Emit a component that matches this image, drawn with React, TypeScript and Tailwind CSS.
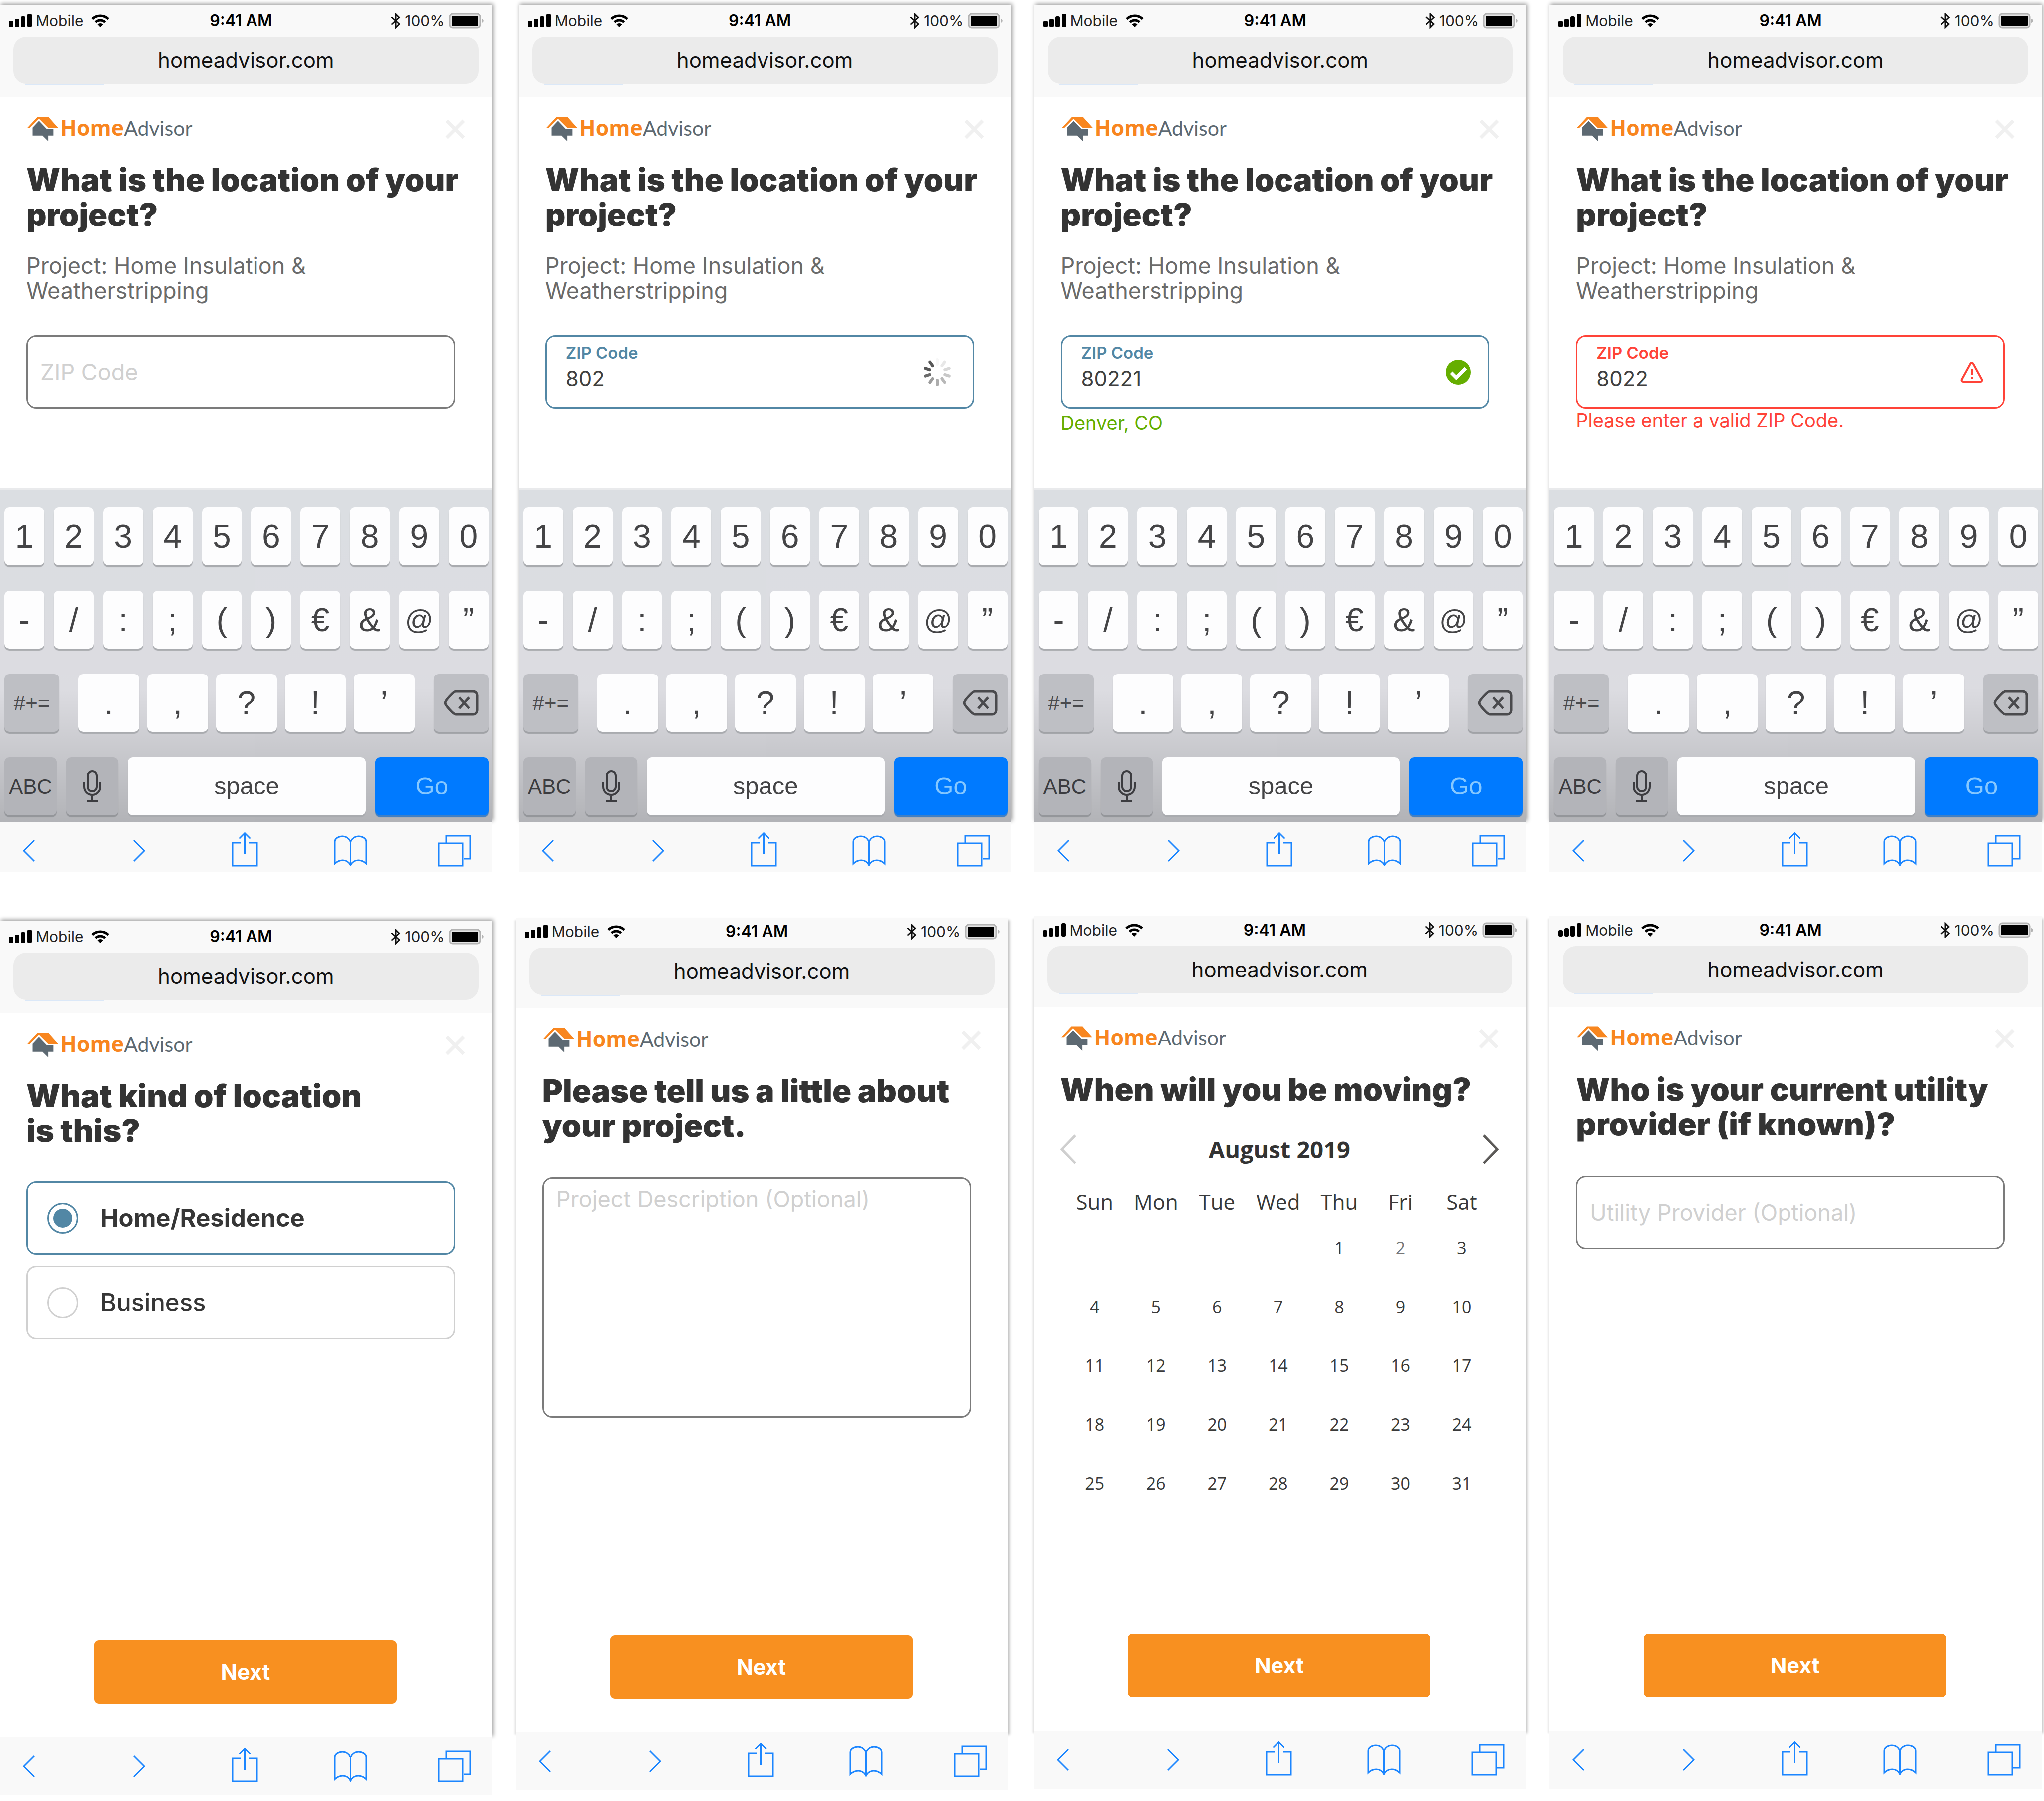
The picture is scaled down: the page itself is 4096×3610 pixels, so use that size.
import { useId, type ReactNode } from "react";

const INTER = "font-['Inter',sans-serif]";
const KEY_FONT = "font-['Liberation_Sans',Arial,sans-serif]";

/* ---------- icons ---------- */

function SignalBars() {
  return (
    <svg viewBox="0 0 46 28" className="h-[28px] w-[46px]" aria-hidden="true">
      <rect x="0" y="14" width="9" height="13" rx="3" />
      <rect x="12" y="10" width="9" height="17" rx="3" />
      <rect x="24" y="5" width="9" height="22" rx="3" />
      <rect x="37" y="0" width="9" height="27" rx="3" />
    </svg>
  );
}

function Wifi() {
  return (
    <svg viewBox="0 0 36 26" className="h-[26px] w-[36px]" fill="none" stroke="#000" strokeWidth="5" aria-hidden="true">
      <path d="M2 9.5a23 23 0 0 1 32 0" />
      <path d="M8.5 16a13.5 13.5 0 0 1 19 0" />
      <path d="M18 26l-5.5-5.800a8 8 0 0 1 11 0z" fill="#000" stroke="none" />
    </svg>
  );
}

function Bluetooth() {
  return (
    <svg viewBox="0 0 20 32" className="h-[32px] w-[20px]" fill="none" stroke="#111" strokeWidth="3" aria-hidden="true">
      <path d="M1.500 8.500L17 22.500L10 29.500V2.500L17 9.500L1.500 23.500" />
    </svg>
  );
}

function Battery() {
  return (
    <svg viewBox="0 0 70 32" className="h-[32px] w-[70px]" aria-hidden="true">
      <rect x="2" y="2" width="61" height="28" rx="6" fill="#e4e4e4" stroke="#b3b3b3" strokeWidth="3" />
      <rect x="6" y="6" width="53" height="20" rx="1" fill="#000" />
      <path d="M66 12c5 1 5 7 0 8z" fill="#b3b3b3" />
    </svg>
  );
}

function LogoMark() {
  return (
    <svg viewBox="68 84 212 170" className="h-[50px] w-[62px]" aria-hidden="true">
      <path d="M68 160L137 85H213L280 160H211L148 97L85 160Z" fill="#f8861f" />
      <path d="M148 112L203 169H247V213H212V252L172 213H104V158Z" fill="#5d6972" />
    </svg>
  );
}

function Close() {
  return (
    <svg viewBox="0 0 40 40" className="size-[40px]" fill="none" stroke="#f0f0f0" strokeWidth="7" aria-hidden="true">
      <path d="M3 3L37 37M37 3L3 37" />
    </svg>
  );
}

const SPOKES = [0.04, 0.12, 0.2, 0.28, 0.36, 0.42, 0.5, 0.75, 0.85, 0.85];

function Spinner() {
  return (
    <svg viewBox="-28 -28 56 56" className="mr-[43px] size-[56px]" role="img" aria-label="Checking">
      {SPOKES.map((o, i) => (
        <line
          key={i}
          x1="0"
          y1="-25"
          x2="0"
          y2="-16"
          stroke="#3a3a3a"
          strokeOpacity={o}
          strokeWidth="6"
          strokeLinecap="round"
          transform={`rotate(${i * 36})`}
        />
      ))}
    </svg>
  );
}

function Valid() {
  return (
    <svg viewBox="0 0 50 50" className="mr-[34px] size-[50px]" role="img" aria-label="Valid">
      <circle cx="25" cy="25" r="25" fill="#65ae00" />
      <path d="M11 26L21 36L40 17" fill="none" stroke="#fff" strokeWidth="7" />
    </svg>
  );
}

function Warning() {
  return (
    <svg
      viewBox="0 0 46 44"
      className="mr-[40px] h-[44px] w-[46px]"
      fill="none"
      stroke="#ff4338"
      strokeWidth="4"
      strokeLinejoin="round"
      role="img"
      aria-label="Invalid"
    >
      <path d="M20.500 4.500a3 3 0 0 1 5 0L43 36.500a3 3 0 0 1-2.600 4.500H5.600A3 3 0 0 1 3 36.500Z" />
      <path d="M23 15V28M23 32V36" />
    </svg>
  );
}

function DeleteIcon() {
  return (
    <svg viewBox="0 0 70 52" className="h-[52px] w-[70px]" fill="none" stroke="#4a4a4d" strokeWidth="5" aria-hidden="true">
      <path d="M24 3H59a8 8 0 0 1 8 8V41a8 8 0 0 1-8 8H24C20 49 3 31 3 26S20 3 24 3Z" strokeLinejoin="round" />
      <path d="M31 15L51 37M51 15L31 37" />
    </svg>
  );
}

function MicIcon() {
  return (
    <svg viewBox="0 0 38 64" className="h-[64px] w-[38px]" fill="none" stroke="#3c3c40" strokeWidth="4" aria-hidden="true">
      <rect x="10" y="2" width="18" height="40" rx="9" />
      <path d="M3 23V33a16 16 0 0 0 32 0V23M19 49V61M8 61.500H30" />
    </svg>
  );
}

function Chevron({ dir }: { dir: "left" | "right" }) {
  return (
    <svg viewBox="0 0 26 46" className="h-[46px] w-[26px]" aria-hidden="true">
      <path d={dir === "left" ? "M24 2L3 23L24 44" : "M2 2L23 23L2 44"} />
    </svg>
  );
}

/* ---------- phone chrome ---------- */

function BrowserHeader({ cut }: { cut: string }) {
  return (
    <header className="bg-[#f9f9f9] px-[27px]">
      <div
        className={`-mr-[10px] -ml-[9px] grid grid-cols-[403fr_auto_424fr] items-center pb-[14px] text-[30px] leading-[36px] text-[#222] ${cut}`}
      >
        <div className="flex items-center gap-[8px]">
          <SignalBars />
          <span>Mobile</span>
          <span className="ml-[8px]">
            <Wifi />
          </span>
        </div>
        <time className="text-[32px] font-semibold text-black">9:41 AM</time>
        <div className="flex items-center justify-end gap-[8px]">
          <Bluetooth />
          <span>100%</span>
          <Battery />
        </div>
      </div>
      <a href="#address" className="block rounded-[26px] bg-[#ebebeb] text-center text-[42px] leading-[94px] text-[#111]">
        homeadvisor.com
      </a>
      <div className="pb-[25px] pl-[23px]">
        <div className="h-[2px] w-[158px] bg-[#dbe8f8]" />
      </div>
    </header>
  );
}

function Toolbar({ end }: { end: string }) {
  return (
    <nav
      className={`grid grid-cols-[221fr_198fr_204fr_208fr_67px] items-center bg-[#f9f9f9] fill-none stroke-[#1c86ff] stroke-[3px] pt-[20px] pr-[42px] pl-[45px] ${end}`}
    >
      <button aria-label="Back" className="flex h-[76px] items-center">
        <Chevron dir="left" />
      </button>
      <button aria-label="Forward" className="flex h-[76px] items-center">
        <Chevron dir="right" />
      </button>
      <button aria-label="Share" className="flex h-[76px] items-start">
        <svg viewBox="0 0 53 70" className="h-[70px] w-[53px]">
          <path d="M18 22H2V68H51V22H35M26.500 3V45M15.500 13.500L26.500 2.500L37.500 13.500" />
        </svg>
      </button>
      <button aria-label="Bookmarks" className="flex h-[76px] items-center">
        <svg viewBox="0 0 67 62" className="h-[62px] w-[67px]">
          <path d="M33.500 13C30 5 25 2 17.500 2C10 2 2 6 2 13V57C7 52 12 50 18 50C25 50 30 53 33.500 60C37 53 42 50 49 50C55 50 60 52 65 57V13C65 6 57 2 49.500 2C42 2 37 5 33.500 13V60" />
        </svg>
      </button>
      <button aria-label="Tabs" className="flex h-[76px] items-center">
        <svg viewBox="0 0 67 64" className="h-[64px] w-[67px]">
          <path d="M2 17H50V62H2ZM17 16V2H65V48H52" />
        </svg>
      </button>
    </nav>
  );
}

const SHADOW = "shadow-[2px_-2px_8px_rgba(0,0,0,0.4)]";
const SIDE_SHADOW = "shadow-[3px_5px_5px_rgba(0,0,0,0.25),-3px_5px_3px_rgba(0,0,0,0.08)]";

type PhoneProps = {
  title: ReactNode;
  children: ReactNode;
  place?: string;
  keyboard?: boolean;
  next?: boolean;
  trimmed?: string;
};

function Phone({ title, children, place = "", keyboard = false, next = false, trimmed }: PhoneProps) {
  return (
    <article className={`min-w-0 flex-1 ${place}`}>
      <div className={trimmed ? SIDE_SHADOW : SHADOW}>
        <BrowserHeader cut={trimmed ?? "pt-[14px]"} />
        <section
          className={`flex flex-col bg-white pt-[38px] pr-[54px] pl-[53px] ${keyboard ? "min-h-[783px]" : "min-h-[1451px] pb-[67px]"}`}
        >
          <div className="flex items-center justify-between">
            <a href="#home" className="flex items-center gap-[4px] pl-[2px] text-[43px] leading-[46px]">
              <LogoMark />
              <span className="flex items-baseline pb-[4px]">
                <b className="font-['Open_Sans',sans-serif] font-bold text-[#f8861f]">Home</b>
                <span className="font-['Lato',sans-serif] text-[41px] text-[#5d6972]">Advisor</span>
              </span>
            </a>
            <button aria-label="Close">
              <Close />
            </button>
          </div>
          <h2 className="mt-[41px] text-[63px] leading-[70px] font-black whitespace-nowrap text-[#333]">{title}</h2>
          {children}
          {next && (
            <button className="mt-auto mr-[1px] h-[127px] w-[606px] self-center rounded-[9px] bg-[#f89020] text-[43px] font-bold text-white">
              Next
            </button>
          )}
        </section>
        {keyboard && <Keyboard />}
      </div>
      <Toolbar end={keyboard ? "pb-[5px]" : "pb-[20px]"} />
    </article>
  );
}

/* ---------- keyboard ---------- */

const LIGHT_KEY = "flex h-[116px] items-center justify-center rounded-[10px] bg-[#fdfdfe] text-[#444446] shadow-[0_4px_1px_#a9abaf]";
const DARK_KEY = "flex h-[116px] items-center justify-center rounded-[10px] bg-[#bebfc4] text-[#4a4a4d] shadow-[0_4px_1px_#a0a2a6]";
const DARKER_KEY = "flex h-[116px] items-center justify-center rounded-[10px] bg-[#b3b4b9] text-[#3c3c40] shadow-[0_4px_1px_#94969a]";

function Keyboard() {
  return (
    <div
      className={`flex flex-col gap-[51px] border-t-4 border-[#e9eaec] bg-linear-to-b from-[#dbdee2] via-[#dcdce1] via-60% to-[#b2b3b7] pt-[35px] pr-[7px] pb-[13px] pl-[9px] text-[66px] ${KEY_FONT}`}
    >
      <div className="grid grid-cols-10 gap-[19px]">
        {[..."1234567890"].map((k) => (
          <button key={k} className={LIGHT_KEY}>
            {k}
          </button>
        ))}
      </div>
      <div className="grid grid-cols-10 gap-[19px]">
        {[..."-/:;()€&@”"].map((k) => (
          <button key={k} className={`${LIGHT_KEY} ${k === "@" ? "text-[56px]" : ""}`}>
            {k}
          </button>
        ))}
      </div>
      <div className="flex gap-[38px]">
        <button className={`${DARK_KEY} w-[110px] text-[42px]`}>#+=</button>
        <div className="grid flex-1 grid-cols-5 gap-[16px]">
          {[...".,?!’"].map((k) => (
            <button key={k} className={LIGHT_KEY}>
              {k}
            </button>
          ))}
        </div>
        <button aria-label="Delete" className={`${DARK_KEY} w-[110px]`}>
          <DeleteIcon />
        </button>
      </div>
      <div className="flex gap-[19px] text-[49px]">
        <button className={`${DARKER_KEY} w-[105px] text-[42px]`}>ABC</button>
        <button aria-label="Dictate" className={`${DARKER_KEY} w-[104px]`}>
          <MicIcon />
        </button>
        <button className={`${LIGHT_KEY} flex-1`}>space</button>
        <button className="flex h-[116px] w-[227px] items-center justify-center rounded-[10px] bg-[#007aff] text-[#86c8ff] shadow-[0_4px_1px_#3f7fc4]">
          Go
        </button>
      </div>
    </div>
  );
}

/* ---------- form pieces ---------- */

function ProjectLine() {
  return (
    <p className="mt-[43px] text-[45px] leading-[50px] text-[#6b6b6b]">
      Project: Home Insulation &<br />
      Weatherstripping
    </p>
  );
}

/* The label rests inside the box until something is typed. */
const RESTING_LABEL = "pointer-events-none absolute left-[28px] text-[45px] leading-[54px] text-[#d0d0d0]";

function EmptyField({ label, gap }: { label: string; gap: string }) {
  const id = useId();
  return (
    <div className={`pr-[20px] ${gap}`}>
      <div className="relative flex items-center">
        <input id={id} className="h-[147px] w-full rounded-[20px] border-[3px] border-[#7b7b7b] bg-white px-[26px] text-[45px]" />
        <label htmlFor={id} className={RESTING_LABEL}>
          {label}
        </label>
      </div>
    </div>
  );
}

function ProjectDescription() {
  const id = useId();
  return (
    <div className="relative mt-[69px] mr-[20px] flex flex-col">
      <textarea
        id={id}
        className="h-[482px] w-full resize-none rounded-[20px] border-[3px] border-[#7b7b7b] bg-white px-[24px] py-[14px] text-[45px] leading-[54px]"
      />
      <label htmlFor={id} className={`${RESTING_LABEL} top-[17px]`}>
        Project Description (Optional)
      </label>
    </div>
  );
}

type ZipFieldProps = { value: string; tone: string; labelTone: string; icon: ReactNode; note?: ReactNode };

function ZipField({ value, tone, labelTone, icon, note }: ZipFieldProps) {
  const id = useId();
  return (
    <div className="mt-[64px] pr-[20px]">
      <div className={`flex h-[147px] items-center rounded-[20px] border-[3px] bg-white pl-[38px] ${tone}`}>
        <div className="flex h-full min-w-0 flex-1 flex-col pt-[12px]">
          <label htmlFor={id} className={`text-[33px] leading-[40px] font-semibold ${labelTone}`}>
            ZIP Code
          </label>
          <input id={id} defaultValue={value} className="mt-[3px] h-[56px] w-full bg-transparent text-[42px] text-[#404040]" />
        </div>
        {icon}
      </div>
      {note}
    </div>
  );
}

function Choice({ text, name, checked = false }: { text: string; name: string; checked?: boolean }) {
  return (
    <label
      className={`flex h-[147px] items-center gap-[44px] rounded-[20px] border-[3px] bg-white pl-[39px] text-[49px] text-[#363636] ${checked ? "border-[#5287a5] font-bold" : "border-[#d0d0d0] font-medium"}`}
    >
      <input
        type="radio"
        name={name}
        defaultChecked={checked}
        className="size-[62px] appearance-none rounded-full border-[3px] border-[#d0d0d0] checked:border-[#5287a5] checked:bg-[#5287a5] checked:shadow-[inset_0_0_0_9px_#fff]"
      />
      {text}
    </label>
  );
}

const DAYS = ["Sun", "Mon", "Tue", "Wed", "Thu", "Fri", "Sat"];
const WEEKS = [0, 1, 2, 3, 4].map((w) => DAYS.map((_, d) => w * 7 + d - 3));

function Calendar() {
  return (
    <div className="font-['Open_Sans',sans-serif] text-[#3a3a3a]">
      <div className="mt-[56px] flex h-[60px] items-center justify-between fill-none stroke-[5px]">
        <button aria-label="Previous month">
          <svg viewBox="0 0 32 60" className="h-[60px] w-[32px] stroke-[#cfcfcf]">
            <path d="M30 2L3 30L30 58" />
          </svg>
        </button>
        <h3 className="text-[47px] font-bold text-[#333]">August 2019</h3>
        <button aria-label="Next month">
          <svg viewBox="0 0 32 60" className="h-[60px] w-[32px] stroke-[#5c5a58]">
            <path d="M2 2L29 30L2 58" />
          </svg>
        </button>
      </div>
      <div className="mt-[41px] pr-[13px] pl-[8px]">
        <table className="w-full table-fixed text-center">
          <thead>
            <tr className="h-[67px]">
              {DAYS.map((d) => (
                <th key={d} scope="col" className="text-[42px] leading-[60px] font-normal">
                  {d}
                </th>
              ))}
            </tr>
          </thead>
          <tbody className="text-[34px]">
            {WEEKS.map((week, i) => (
              <tr key={i} className="h-[118px]">
                {week.map((n) => (
                  <td key={n}>{n > 0 && <button className={n === 2 ? "text-[#777]" : ""}>{n}</button>}</td>
                ))}
              </tr>
            ))}
          </tbody>
        </table>
      </div>
    </div>
  );
}

/* ---------- page ---------- */

const LOCATION_TITLE = (
  <>
    What is the location of your
    <br />
    project?
  </>
);

export default function App() {
  return (
    <main className={`min-h-screen overflow-hidden bg-white ${INTER}`}>
      <div className="flex items-start pt-[10px] pr-[5px]">
        <Phone title={LOCATION_TITLE} keyboard>
          <ProjectLine />
          <EmptyField label="ZIP Code" gap="mt-[64px]" />
        </Phone>
        <Phone title={LOCATION_TITLE} keyboard place="ml-[54px]">
          <ProjectLine />
          <ZipField value="802" tone="border-[#5287a5]" labelTone="text-[#5287a5]" icon={<Spinner />} />
        </Phone>
        <Phone title={LOCATION_TITLE} keyboard place="ml-[47px]">
          <ProjectLine />
          <ZipField
            value="80221"
            tone="border-[#5287a5]"
            labelTone="text-[#5287a5]"
            icon={<Valid />}
            note={<p className="mt-[6px] text-[38px] leading-[44px] text-[#65ae00]">Denver, CO</p>}
          />
        </Phone>
        <Phone title={LOCATION_TITLE} keyboard place="ml-[47px]">
          <ProjectLine />
          <ZipField
            value="8022"
            tone="border-[#ff4338]"
            labelTone="text-[#ff4338]"
            icon={<Warning />}
            note={<p className="mt-[1px] text-[38px] leading-[44px] text-[#ff4338]">Please enter a valid ZIP Code.</p>}
          />
        </Phone>
      </div>

      <div className="flex items-start pt-[89px] pr-[5px]">
        <Phone
          next
          place="mt-[9px]"
          title={
            <>
              What kind of location
              <br />
              is this?
            </>
          }
        >
          <div className="mt-[67px] flex flex-col gap-[22px] pr-[20px]">
            <Choice name="kind" text="Home/Residence" checked />
            <Choice name="kind" text="Business" />
          </div>
        </Phone>
        <Phone
          next
          trimmed="pt-[10px]"
          place="mt-[3px] ml-[48px]"
          title={
            <>
              Please tell us a little about
              <br />
              your project.
            </>
          }
        >
          <ProjectDescription />
        </Phone>
        <Phone next trimmed="pt-[10px]" place="ml-[52px]" title="When will you be moving?">
          <Calendar />
        </Phone>
        <Phone
          next
          trimmed="pt-[10px]"
          place="ml-[48px]"
          title={
            <>
              Who is your current utility
              <br />
              provider (if known)?
            </>
          }
        >
          <EmptyField label="Utility Provider (Optional)" gap="mt-[69px]" />
        </Phone>
      </div>
    </main>
  );
}
